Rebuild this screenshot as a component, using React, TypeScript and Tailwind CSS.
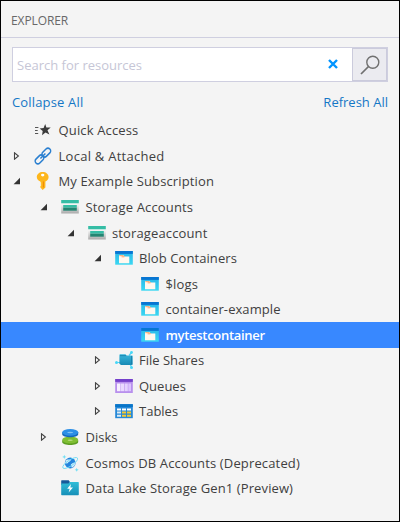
import React from "react";

type IconName = "star" | "link" | "key" | "storage" | "blob" | "share" | "queue" | "table" | "disk" | "cosmos" | "lake";

function Icon({ name }: { name: IconName }) {
  const cls = "h-[18px] w-[18px] shrink-0";
  switch (name) {
    case "star":
      return (
        <svg viewBox="0 0 18 18" className={cls}>
          <path d="M11.200 3l1.200 3.600 4.300-.2-3.200 2.800 1.900 4.400-3.900-2-3.500 2.700.7-4.300L5.600 7.600l4-.6z" fill="#3b3b3b" />
          <path d="M1 6.500h3.400M1 9.500h2.700M1 12.500h3.200" stroke="#555" strokeWidth="1" />
        </svg>
      );
    case "link":
      return (
        <svg viewBox="0 0 18 18" className={cls} fill="none" stroke="#2a7fd0" strokeWidth="1.500">
          <rect x="-5" y="-2.700" width="10" height="5.400" rx="2.700" transform="translate(12.300 5.600) rotate(-45)" />
          <rect x="-5" y="-2.700" width="10" height="5.400" rx="2.700" transform="translate(5.500 12.400) rotate(-45)" />
          <path d="M6.400 11.500l5-5" />
        </svg>
      );
    case "key":
      return (
        <svg viewBox="0 0 18 18" className={cls}>
          <path d="M8.700 0c3.300 0 5.900 2.100 5.900 5.100 0 2.100-1.300 3.600-3.200 4.500v6l-2.700 2.400-2.300-2.400V14l1-1-1-1 1-1-1-.8v-.7C4.300 8.600 2.800 7.200 2.800 5.100 2.800 2.100 5.400 0 8.700 0z" fill="#fdb61c" />
          <ellipse cx="8.700" cy="3.100" rx="1.700" ry="1.300" fill="#fff" />
          <path d="M9.400 9.500v6" stroke="#f08a00" strokeWidth="1" />
        </svg>
      );
    case "storage":
      return (
        <svg viewBox="0 0 18 18" className={cls}>
          <defs>
            <linearGradient id="storageBody" x2="0" y2="1">
              <stop stopColor="#fff" />
              <stop offset="1" stopColor="#aaa" />
            </linearGradient>
          </defs>
          <path d="M.2 5h17.600v10.500H.2z" fill="url(#storageBody)" />
          <path d="M.2 2h17.600v3.300H.2z" fill="#35bda5" />
          <path d="M2.200 7h13.600v2.700H2.200z" fill="#35bda5" />
          <path d="M2.200 9.700h13.600v3H2.200z" fill="#248572" />
        </svg>
      );
    case "blob":
      return (
        <svg viewBox="0 0 18 18" className={cls}>
          <defs>
            <linearGradient id="blobBody" x2="0" y2="1">
              <stop stopColor="#29b4e9" />
              <stop offset="1" stopColor="#3bd8f2" />
            </linearGradient>
          </defs>
          <path d="M.2 2h17.600v13.700H.2z" fill="url(#blobBody)" />
          <path d="M.2 2h17.600v2.900H.2z" fill="#0875d2" />
          <path d="M4 6.200h4.700l1.100 1.200h4.500v6.900H4z" fill="#fff8ef" />
          <path d="M4.400 6.700h4l1 1.100H6.600" fill="none" stroke="#ffa56a" strokeWidth="1" />
        </svg>
      );
    case "share":
      return (
        <svg viewBox="0 0 18 18" className={cls}>
          <defs>
            <linearGradient id="shareBody" x2="0" y2="1">
              <stop stopColor="#39b7dc" />
              <stop offset="1" stopColor="#188ab5" />
            </linearGradient>
          </defs>
          <path d="M1.500 11.500h5M14 4.500l2.500-3M15 13l1.500 3" stroke="#54d4f4" strokeWidth="1.200" />
          <path d="M5.500 3.300h5l1 1.200h5.200c.7 0 1 .4 1 1v7.400c0 .6-.4 1-1 1H6l-1.600-1.200V4.300c0-.6.4-1 1.100-1z" fill="url(#shareBody)" />
          <path d="M5 4.700h6.200M16.500 5v8" stroke="#157ba5" strokeWidth=".8" />
          <circle cx="1.500" cy="11.500" r="1.500" fill="#46d8f8" />
          <circle cx="16.500" cy="1.500" r="1.400" fill="#46d8f8" />
          <circle cx="16.500" cy="16.400" r="1.500" fill="#46d8f8" />
        </svg>
      );
    case "queue":
      return (
        <svg viewBox="0 0 18 18" className={cls}>
          <path d="M.2 2h17.600v14H.2z" fill="#b890ed" />
          <path d="M.2 2h17.600v2.900H.2z" fill="#7440cb" />
          <path d="M2 6.500h3.500v7.700H2z" fill="#f7efff" />
          <path d="M6 6.500h3.300v7.700H6z" fill="#ead9ff" />
          <path d="M9.800 6.500h3v7.700h-3z" fill="#e5d2ff" />
          <path d="M13.300 6.500H16v7.700h-2.700z" fill="#dcc4ff" />
        </svg>
      );
    case "table":
      return (
        <svg viewBox="0 0 18 18" className={cls}>
          <path d="M.2 2.200h17.600v14H.2z" fill="#2588d7" />
          <path d="M.2 2.200h17.600V5H.2z" fill="#0875c8" />
          <path d="M2 6.500h4v2H2zM7 6.500h4v2H7zM12 6.500h4v2h-4z" fill="#fff" />
          <path d="M2 9.600h4v2H2zM2 12.700h4v2H2z" fill="#dceaf4" />
          <path d="M7 9.600h4v2H7zM12 9.600h4v2h-4zM7 12.700h4v2H7zM12 12.700h4v2h-4z" fill="#f6c92f" />
        </svg>
      );
    case "disk":
      return (
        <svg viewBox="0 0 18 18" className={cls}>
          <path d="M1.200 12.200v1.700c0 4 16 4 16 0v-1.700z" fill="#5c9d22" />
          <ellipse cx="9.200" cy="12" rx="8" ry="3.400" fill="#7fbe32" />
          <ellipse cx="9.200" cy="12.200" rx="2.600" ry=".8" fill="#b5db7e" />
          <path d="M1.200 4.200v2c0 4 16 4 16 0v-2z" fill="#1668ba" />
          <ellipse cx="9.200" cy="4.300" rx="8" ry="3.400" fill="#2c8fe6" />
          <ellipse cx="9.200" cy="4.500" rx="3" ry=".8" fill="#7fc0f3" />
        </svg>
      );
    case "cosmos":
      return (
        <svg viewBox="0 0 18 18" className={cls}>
          <circle cx="9.200" cy="9" r="5.400" fill="#2384dd" />
          <path d="M5.200 6c2-.8 4.300-.6 4.500.6.1 1.100-2.300.8-2.700 2.200-.3 1-2 .6-3 .1zM9.800 10.500c1.900-1.600 3.700-2.500 4.600-1.700-.2 2.200-1.500 4.100-3.600 4.900z" fill="#d3edfa" />
          <ellipse cx="9.200" cy="9" rx="8.800" ry="2.900" fill="none" stroke="#70dcf6" strokeWidth=".9" transform="rotate(-34 9.200 9)" />
          <path d="M3.300.8l.6 1.500 1.500.6-1.500.6-.6 1.500-.6-1.500-1.500-.6 1.500-.6zM15.700 13.800l.6 1.400 1.400.6-1.400.6-.6 1.400-.6-1.400-1.400-.6 1.400-.6z" fill="#70dff5" />
        </svg>
      );
    case "lake":
      return (
        <svg viewBox="0 0 18 18" className={cls}>
          <defs>
            <linearGradient id="lakeBody" x2="0" y2="1">
              <stop stopColor="#32bed8" />
              <stop offset="1" stopColor="#168fb8" />
            </linearGradient>
          </defs>
          <path d="M.8 1.200h6.900l1.100 1.500V6H.2V1.800c0-.4.200-.6.600-.6z" fill="#15599a" />
          <path d="M.2 4.500h7.300l1.400-1.600h8.300c.4 0 .6.200.6.600v12c0 .5-.2.700-.6.700H.8c-.4 0-.6-.2-.6-.7z" fill="url(#lakeBody)" />
          <path d="M9.900 5L6.200 9.700h2.500l-1.100 3.800 4.400-5H9.400z" fill="#fff" />
        </svg>
      );
  }
}

type Row = { label: string; level: number; icon: IconName; arrow?: "open" | "closed"; type: string; selected?: boolean };

const rows: Row[] = [
  { label: "Quick Access", level: 0, icon: "star", type: "tracking-[0.15px]" },
  { label: "Local & Attached", level: 0, icon: "link", arrow: "closed", type: "tracking-[0.27px]" },
  { label: "My Example Subscription", level: 0, icon: "key", arrow: "open", type: "tracking-[0.13px]" },
  { label: "Storage Accounts", level: 1, icon: "storage", arrow: "open", type: "tracking-[0.16px]" },
  { label: "storageaccount", level: 2, icon: "storage", arrow: "open", type: "tracking-[0.13px]" },
  { label: "Blob Containers", level: 3, icon: "blob", arrow: "open", type: "tracking-[0.08px]" },
  { label: "$logs", level: 4, icon: "blob", type: "tracking-[0.15px]" },
  { label: "container-example", level: 4, icon: "blob", type: "tracking-[0.07px]" },
  { label: "mytestcontainer", level: 4, icon: "blob", type: "font-semibold tracking-[-0.3px]", selected: true },
  { label: "File Shares", level: 3, icon: "share", arrow: "closed", type: "tracking-[0px]" },
  { label: "Queues", level: 3, icon: "queue", arrow: "closed", type: "tracking-[0px]" },
  { label: "Tables", level: 3, icon: "table", arrow: "closed", type: "tracking-[0px]" },
  { label: "Disks", level: 1, icon: "disk", arrow: "closed", type: "tracking-[0px]" },
  { label: "Cosmos DB Accounts (Deprecated)", level: 1, icon: "cosmos", type: "tracking-[0.15px]" },
  { label: "Data Lake Storage Gen1 (Preview)", level: 1, icon: "lake", type: "tracking-[0.11px]" },
];

const indents = ["pl-[12px]", "pl-[39px]", "pl-[65.500px]", "pl-[92.500px]", "pl-[119px]"];

function TreeRow({ row }: { row: Row }) {
  return (
    <li className={`flex h-[25.570px] items-center ${indents[row.level]} ${row.selected ? "bg-[#3888ff] text-white" : "text-[#404040]"}`}>
      <span className="flex w-[21px] shrink-0">
        {row.arrow === "open" && (
          <svg viewBox="0 0 8 8" className="h-2 w-2"><path d="M7 .8v6.400H.6z" fill="#333" /></svg>
        )}
        {row.arrow === "closed" && (
          <svg viewBox="0 0 8 8" className="h-2 w-2"><path d="M1.500.8v6.400L5.400 4z" fill="#fff" stroke="#444" strokeWidth="1.100" /></svg>
        )}
      </span>
      <Icon name={row.icon} />
      <span className={`ml-[6.500px] whitespace-nowrap ${row.type}`}>{row.label}</span>
    </li>
  );
}

export default function App() {
  return (
    <div className="flex h-[522px] w-[400px] flex-col overflow-hidden border border-black bg-[#f4f4f4] text-[13px] leading-[18px]" style={{ fontFamily: '"Open Sans", "Noto Sans", sans-serif' }}>
      <header className="flex h-[37px] shrink-0 items-center border-b border-[#cfcfe0] pt-[3px] pl-[10px] text-[12px] tracking-[-0.1px] text-[#686868]">EXPLORER</header>
      <div className="mx-[11px] mt-[9px] flex h-[35px] shrink-0 border border-[#cfcfe0] bg-white">
        <div className="flex flex-1 items-center pr-[14px] pl-[4px] text-[#c6c6d6]">
          <span className="flex-1">Search for resources</span>
          <svg viewBox="0 0 10 10" className="-mt-[2px] h-[10px] w-[10px]"><path d="M1 1l8 8M9 1L1 9" stroke="#0094ff" strokeWidth="2.400" /></svg>
        </div>
        <button className="flex w-[35px] items-center justify-center border border-[#cbcbdc] bg-[#ebebf0]">
          <svg viewBox="0 0 20 20" className="h-5 w-5" fill="none" stroke="#707070" strokeWidth="1.400"><circle cx="12.800" cy="7.300" r="6" /><path d="M8.500 11.500L1 19" strokeWidth="1.700" /></svg>
        </button>
      </div>
      <div className="mx-[11px] mt-[11px] flex h-[18px] shrink-0 justify-between text-[#1477c6]">
        <span className="tracking-[0.16px]">Collapse All</span>
        <span>Refresh All</span>
      </div>
      <ul className="mt-[6.500px] shrink-0">
        {rows.map((row) => <TreeRow key={row.label} row={row} />)}
      </ul>
    </div>
  );
}
